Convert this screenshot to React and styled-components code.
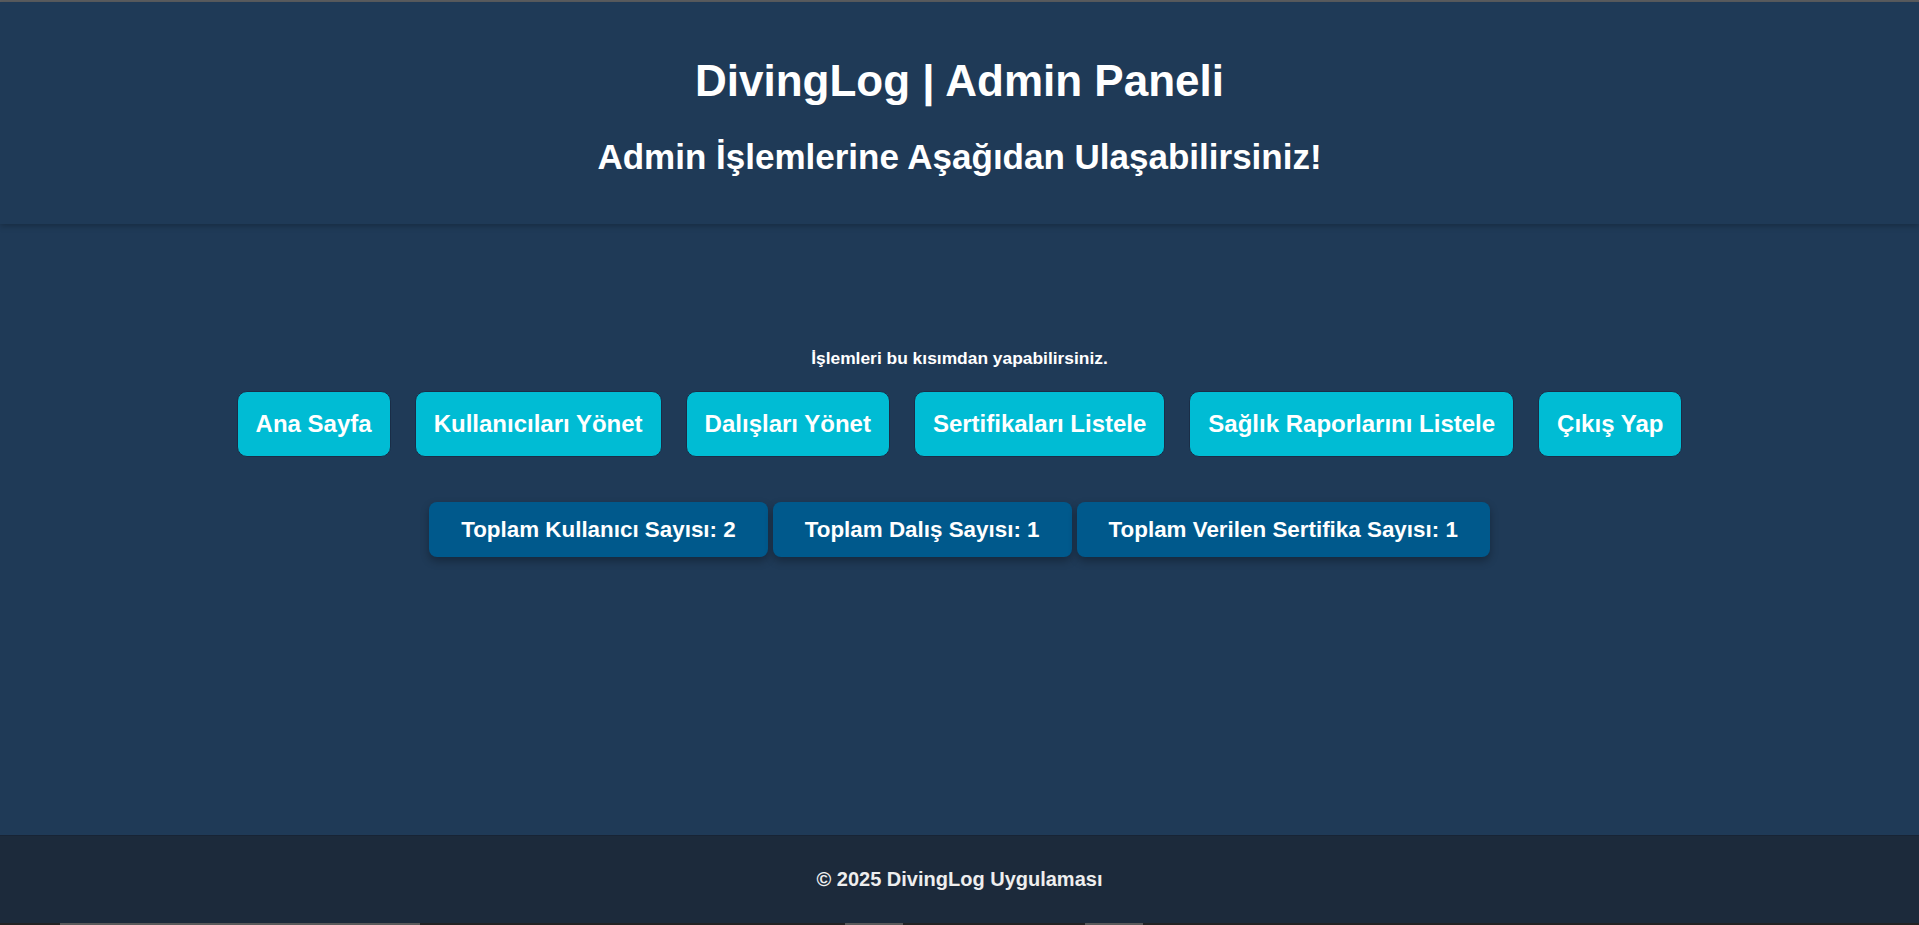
import React from 'react'
import styled, { createGlobalStyle } from 'styled-components'

const GlobalStyle = createGlobalStyle`
  html, body {
    margin: 0;
    padding: 0;
    background: #1f3a57;
    font-family: 'Liberation Sans', Arial, sans-serif;
  }
  * {
    box-sizing: border-box;
  }
`

const Page = styled.div`
  min-height: 100vh;
  display: flex;
  flex-direction: column;
  border-top: 2px solid #5b5d60;
  background: #1f3a57;
  color: #ffffff;
`

const Header = styled.header`
  background: #1f3a57;
  text-align: center;
  padding: 54px 20px 47px;
  box-shadow: 0 2px 6px rgba(0, 0, 0, 0.25);
  position: relative;
  z-index: 1;
`

const Title = styled.h1`
  margin: 0;
  font-size: 44px;
  font-weight: 700;
  color: #ffffff;
`

const Subtitle = styled.h2`
  margin: 31px 0 0;
  font-size: 35px;
  font-weight: 700;
  color: #ffffff;
`

const Main = styled.main`
  flex: 1;
  display: flex;
  flex-direction: column;
  align-items: center;
  padding-top: 124px;
`

const Hint = styled.p`
  margin: 0;
  font-size: 17.4px;
  font-weight: 700;
  color: #ffffff;
`

const ButtonRow = styled.nav`
  display: flex;
  justify-content: center;
  gap: 24px;
  margin-top: 22px;
`

const NavButton = styled.button`
  font-family: 'Liberation Sans', Arial, sans-serif;
  font-size: 24px;
  font-weight: 700;
  color: #ffffff;
  background: #00bcd4;
  border: 1px solid #1a2d47;
  border-radius: 10px;
  padding: 18px;
  line-height: 1.15;
  cursor: pointer;
  transition: background-color 0.3s;

  &:hover {
    background: #00a5bb;
  }
`

const StatsRow = styled.div`
  display: flex;
  justify-content: center;
  gap: 5px;
  margin-top: 45px;
`

const StatCard = styled.div`
  font-size: 22.4px;
  font-weight: 700;
  color: #ffffff;
  background: #00598c;
  border-radius: 8px;
  padding: 15px 32px;
  line-height: 1.15;
  box-shadow: 0 4px 8px rgba(0, 0, 0, 0.3);
`

const Footer = styled.footer`
  height: 88px;
  display: flex;
  align-items: center;
  justify-content: center;
  background: #1c2a3b;
  border-top: 1px solid #182435;
`

const FooterText = styled.p`
  margin: 0;
  font-size: 20px;
  font-weight: 700;
  color: #eeeeee;
`

const BottomStrip = styled.div`
  height: 2px;
  background: #232323;
  position: relative;
`

const StripMark = styled.span`
  position: absolute;
  top: 0;
  height: 2px;
  background: #5a5a5a;
`

const buttons = [
  'Ana Sayfa',
  'Kullanıcıları Yönet',
  'Dalışları Yönet',
  'Sertifikaları Listele',
  'Sağlık Raporlarını Listele',
  'Çıkış Yap',
]

const stats = [
  { label: 'Toplam Kullanıcı Sayısı', value: 2 },
  { label: 'Toplam Dalış Sayısı', value: 1 },
  { label: 'Toplam Verilen Sertifika Sayısı', value: 1 },
]

const marks = [
  { left: 60, width: 360 },
  { left: 845, width: 58 },
  { left: 1085, width: 58 },
]

const App = () => {
  return (
    <>
      <GlobalStyle />
      <Page>
        <Header>
          <Title>DivingLog | Admin Paneli</Title>
          <Subtitle>Admin İşlemlerine Aşağıdan Ulaşabilirsiniz!</Subtitle>
        </Header>
        <Main>
          <Hint>İşlemleri bu kısımdan yapabilirsiniz.</Hint>
          <ButtonRow>
            {buttons.map(b => (
              <NavButton key={b}>{b}</NavButton>
            ))}
          </ButtonRow>
          <StatsRow>
            {stats.map(s => (
              <StatCard key={s.label}>
                {s.label}: {s.value}
              </StatCard>
            ))}
          </StatsRow>
        </Main>
        <Footer>
          <FooterText>© 2025 DivingLog Uygulaması</FooterText>
        </Footer>
        <BottomStrip>
          {marks.map(m => (
            <StripMark key={m.left} style={{ left: m.left, width: m.width }} />
          ))}
        </BottomStrip>
      </Page>
    </>
  )
}

export default App
